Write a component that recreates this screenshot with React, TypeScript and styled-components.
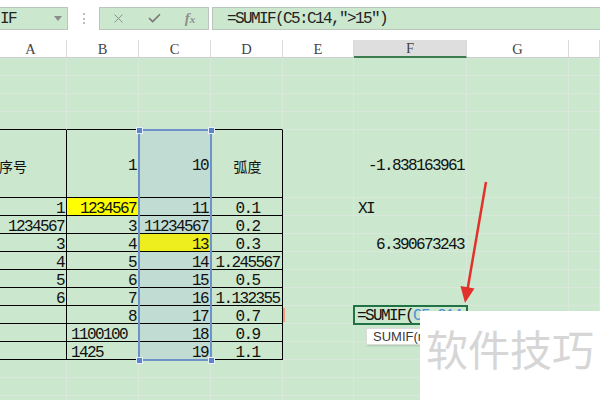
import React from 'react';
import styled, { createGlobalStyle } from 'styled-components';
import { X, Check } from 'lucide-react';

const COLS = '72px 72px 72px 72px 71px 113px 102px 1fr';
const GREEN = '#cbe7cd';
const GRID = '#d9e8da';
const SEL = '#c1dcd2';
const MONO = '"Liberation Mono", "DejaVu Sans Mono", monospace';
const SERIF = '"Liberation Serif", "DejaVu Serif", serif';
const CJK = '"Noto Sans CJK SC", "Noto Sans", sans-serif';

const GlobalStyle = createGlobalStyle`
  html, body { margin: 0; padding: 0; background: #fff; }
  body { width: 600px; height: 400px; overflow: hidden; }
  * { box-sizing: border-box; }
`;

const Screen = styled.div`
  position: relative;
  width: 600px;
  height: 400px;
  overflow: hidden;
  background: #fff;
  display: flex;
  flex-direction: column;
  font-family: ${MONO};
`;

const Toolbar = styled.div`
  height: 40px;
  flex: none;
  display: flex;
  align-items: flex-start;
  padding-top: 7px;
`;

const NameBox = styled.div`
  flex: none;
  width: 70px;
  height: 23px;
  margin-left: -2px;
  border: 1px solid #bcc5bc;
  background: ${GREEN};
  display: flex;
  align-items: center;
  justify-content: space-between;
  padding: 0 5px 0 1px;
  font-size: 16px;
  letter-spacing: -1.6px;
  color: #222;
`;

const Caret = styled.span`
  width: 0;
  height: 0;
  border-left: 4px solid transparent;
  border-right: 4px solid transparent;
  border-top: 5px solid #8c8c8c;
`;

const Dots = styled.div`
  flex: none;
  width: 31px;
  height: 23px;
  display: flex;
  flex-direction: column;
  align-items: center;
  justify-content: center;
  gap: 2.5px;
  & > span {
    width: 2px;
    height: 2px;
    background: #bdbdbd;
  }
`;

const ButtonGroup = styled.div`
  flex: none;
  width: 110px;
  height: 23px;
  border: 1px solid #bcc5bc;
  background: ${GREEN};
  display: flex;
`;

const IconSlot = styled.div`
  flex: 1;
  display: flex;
  align-items: center;
  justify-content: center;
  color: #8a8a8a;
`;

const Fx = styled.span`
  font-family: ${SERIF};
  font-style: italic;
  font-weight: bold;
  font-size: 15px;
  color: #8f8f8f;
  & > small {
    font-size: 11px;
  }
`;

const FormulaInput = styled.div`
  flex: 1;
  margin-left: 3px;
  margin-right: -2px;
  height: 23px;
  border: 1px solid #bcc5bc;
  background: ${GREEN};
  display: flex;
  align-items: center;
  padding: 1px 0 0 14px;
  font-size: 16px;
  letter-spacing: -1.6px;
  color: #222;
  white-space: nowrap;
`;

const HeaderRow = styled.div`
  flex: none;
  display: grid;
  grid-template-columns: ${COLS};
  height: 18px;
  margin-left: -5px;
`;

const HeaderCell = styled.div<{ $active?: boolean }>`
  border-right: 1px solid #dadada;
  border-bottom: ${(p) => (p.$active ? '2px solid #3c7d4f' : '1px solid #cfcfcf')};
  background: ${(p) => (p.$active ? '#dedede' : '#fff')};
  display: flex;
  justify-content: center;
  align-items: flex-end;
  font-family: ${SERIF};
  font-size: 14.5px;
  line-height: 16px;
  color: #444;
`;

const Sheet = styled.div`
  flex: none;
  position: relative;
  display: grid;
  grid-template-columns: ${COLS};
  grid-template-rows: repeat(4, 18px) 68px repeat(12, 18px);
  margin-left: -5px;
  background: ${GREEN};
`;

type Align = 'l' | 'r' | 'c';
const justify = (a?: Align) => (a === 'l' ? 'flex-start' : a === 'c' ? 'center' : 'flex-end');

const Cell = styled.div<{
  $r: number;
  $c: number;
  $align?: Align;
  $fill: string;
  $rb?: boolean;
  $bb?: boolean;
  $cjk?: boolean;
}>`
  grid-row: ${(p) => p.$r};
  grid-column: ${(p) => p.$c};
  position: relative;
  display: flex;
  align-items: center;
  justify-content: ${(p) => justify(p.$align)};
  padding: 4px 2px 0 4px;
  background: ${(p) => p.$fill};
  border-right: 1px solid ${(p) => (p.$rb ? '#000' : GRID)};
  border-bottom: 1px solid ${(p) => (p.$bb ? '#000' : GRID)};
  font-family: ${(p) => (p.$cjk ? CJK : MONO)};
  font-size: ${(p) => (p.$cjk ? '14px' : '16px')};
  letter-spacing: ${(p) => (p.$cjk ? '0' : '-1.6px')};
  color: #111;
  white-space: nowrap;
`;

const Flag = styled.span`
  position: absolute;
  left: 0;
  top: 2px;
  width: 2px;
  height: 14px;
  background: #f29a80;
`;

const Selection = styled.div`
  grid-row: 5 / 15;
  grid-column: 3;
  margin: -1px;
  border: 2px solid #6e91c9;
  position: relative;
  z-index: 2;
  pointer-events: none;
`;

const Handle = styled.span<{ $top: boolean; $left: boolean }>`
  position: absolute;
  width: 7px;
  height: 7px;
  background: #5b85c8;
  border: 1px solid #e8f0fa;
  ${(p) => (p.$top ? 'top: -4.5px;' : 'bottom: -4.5px;')}
  ${(p) => (p.$left ? 'left: -4.5px;' : 'right: -4.5px;')}
`;

const Editor = styled.div`
  grid-row: 12;
  grid-column: 6;
  margin: -1px;
  border: 2px solid #217346;
  background: ${GREEN};
  position: relative;
  z-index: 3;
  display: flex;
  align-items: flex-end;
  padding: 0 0 0 2px;
  font-size: 16px;
  line-height: 13px;
  letter-spacing: -1.6px;
  color: #111;
  white-space: nowrap;
  overflow: hidden;
`;

const Ref = styled.span`
  color: #4f8fd6;
`;

const Tooltip = styled.div`
  position: absolute;
  left: 366px;
  top: 328px;
  height: 17px;
  z-index: 4;
  background: #fff;
  border: 1px solid #dcdcdc;
  box-shadow: 1px 1px 2px rgba(0, 0, 0, 0.15);
  padding: 0 5px 0 6px;
  font-family: "Liberation Sans", Arial, sans-serif;
  font-size: 13px;
  line-height: 15px;
  color: #3a3a3a;
  white-space: nowrap;
`;

const Overlay = styled.svg`
  position: absolute;
  left: 0;
  top: 0;
  z-index: 4;
  pointer-events: none;
`;

const Watermark = styled.div`
  position: absolute;
  left: 420px;
  top: 311px;
  right: 0;
  bottom: 0;
  z-index: 10;
  background: #fff;
  padding: 15px 0 0 6px;
  font-family: ${CJK};
  font-size: 42px;
  line-height: 44px;
  color: #d6d6d6;
  white-space: nowrap;
`;

type CellData = { t?: string; a?: Align; y?: boolean; cjk?: boolean; flag?: boolean };

const E: CellData = {};
const r = (t: string, extra: Partial<CellData> = {}): CellData => ({ t, a: 'r', ...extra });
const c = (t: string): CellData => ({ t, a: 'c' });
const l = (t: string): CellData => ({ t, a: 'l' });

const rows: CellData[][] = [
  [E, E, E, E, E, E, E, E],
  [E, E, E, E, E, E, E, E],
  [E, E, E, E, E, E, E, E],
  [E, E, E, E, E, E, E, E],
  [{ t: '序号', a: 'l', cjk: true }, r('1'), r('10'), { t: '弧度', a: 'c', cjk: true }, E, r('-1.838163961'), E, E],
  [r('1'), r('1234567', { y: true }), r('11'), c('0.1'), E, l('XI'), E, E],
  [r('1234567'), r('3'), r('11234567'), c('0.2'), E, E, E, E],
  [r('3'), r('4'), r('13', { y: true }), c('0.3'), E, r('6.390673243'), E, E],
  [r('4'), r('5'), r('14'), c('1.245567'), E, E, E, E],
  [r('5'), r('6'), r('15'), c('0.5'), E, E, E, E],
  [r('6'), r('7'), r('16'), c('1.132355'), E, E, E, E],
  [E, r('8'), r('17'), c('0.7'), { flag: true }, E, E, E],
  [E, l('1100100'), r('18'), c('0.9'), E, E, E, E],
  [E, l('1425'), r('19'), c('1.1'), E, E, E, E],
  [E, E, E, E, E, E, E, E],
  [E, E, E, E, E, E, E, E],
  [E, E, E, E, E, E, E, E],
];

const headers = ['A', 'B', 'C', 'D', 'E', 'F', 'G', ''];

const fillFor = (ri: number, ci: number, d: CellData) => {
  const selected = ci === 2 && ri >= 4 && ri <= 13;
  if (d.y) return selected ? '#eeee1e' : '#ffff00';
  return selected ? SEL : GREEN;
};

export default function App() {
  return (
    <Screen>
      <GlobalStyle />
      <Toolbar>
        <NameBox>
          <span>IF</span>
          <Caret />
        </NameBox>
        <Dots>
          <span />
          <span />
          <span />
        </Dots>
        <ButtonGroup>
          <IconSlot>
            <X size={15} strokeWidth={1.5} />
          </IconSlot>
          <IconSlot>
            <Check size={15} strokeWidth={2.8} color="#7a7a7a" />
          </IconSlot>
          <IconSlot>
            <Fx>
              f<small>x</small>
            </Fx>
          </IconSlot>
        </ButtonGroup>
        <FormulaInput>=SUMIF(C5:C14,"&gt;15")</FormulaInput>
      </Toolbar>
      <HeaderRow>
        {headers.map((h, i) => (
          <HeaderCell key={i} $active={h === 'F'}>
            {h}
          </HeaderCell>
        ))}
      </HeaderRow>
      <Sheet>
        {rows.map((row, ri) =>
          row.map((d, ci) => {
            const inTable = ci <= 3;
            return (
              <Cell
                key={`${ri}-${ci}`}
                $r={ri + 1}
                $c={ci + 1}
                $align={d.a}
                $fill={fillFor(ri, ci, d)}
                $rb={inTable && ri >= 4 && ri <= 13}
                $bb={inTable && ri >= 3 && ri <= 13}
                $cjk={d.cjk}
              >
                {d.flag && <Flag />}
                {d.t}
              </Cell>
            );
          })
        )}
        <Selection>
          <Handle $top $left />
          <Handle $top $left={false} />
          <Handle $top={false} $left />
          <Handle $top={false} $left={false} />
        </Selection>
        <Editor>
          =SUMIF(<Ref>C5:C14</Ref>,"&gt;15")
        </Editor>
      </Sheet>
      <Tooltip>SUMIF(range, criteria, [sum_range])</Tooltip>
      <Overlay width={600} height={400} viewBox="0 0 600 400">
        <line x1={486} y1={182} x2={467.6} y2={289} stroke="#e2312b" strokeWidth={2.5} />
        <polygon points="460.5,286 474.5,288.5 465,303" fill="#e2312b" />
      </Overlay>
      <Watermark>软件技巧</Watermark>
    </Screen>
  );
}
